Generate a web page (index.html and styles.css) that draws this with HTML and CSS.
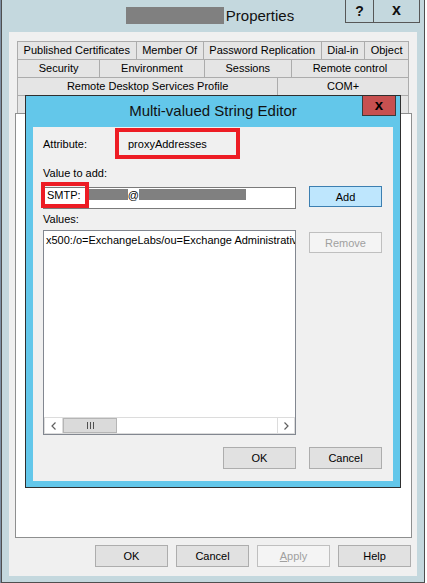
FILE: index.html
```html
<!DOCTYPE html>
<html lang="en">
  <head>
    <title>Properties</title>
    <link rel="stylesheet" href="styles.css">
  </head>
  <body>
    <div class="window">
      <div class="titlebar">
        <div class="title">
          <span class="redacted title-redacted"></span>
          <span>Properties</span>
        </div>
        <div class="caption-buttons">
          <div class="caption-btn help-btn">?</div>
          <div class="caption-btn close-btn">x</div>
        </div>
      </div>

      <div class="window-body">
        <div class="tab-strip">
          <div class="tab-row">
            <div class="tab">Published Certificates</div>
            <div class="tab">Member Of</div>
            <div class="tab">Password Replication</div>
            <div class="tab">Dial-in</div>
            <div class="tab">Object</div>
          </div>
          <div class="tab-row">
            <div class="tab">Security</div>
            <div class="tab">Environment</div>
            <div class="tab">Sessions</div>
            <div class="tab">Remote control</div>
          </div>
          <div class="tab-row">
            <div class="tab">Remote Desktop Services Profile</div>
            <div class="tab">COM+</div>
          </div>
          <!-- 대화상자에 가려진 줄 -->
          <div class="tab-row">
            <div class="tab tab-hidden"></div>
            <div class="tab tab-hidden"></div>
          </div>
        </div>

        <div class="tab-page"></div>

        <div class="button-row">
          <button class="btn">OK</button>
          <button class="btn">Cancel</button>
          <button class="btn btn-disabled"><u>A</u>pply</button>
          <button class="btn">Help</button>
        </div>
      </div>

      <!-- 떠 있는 편집 대화상자 -->
      <div class="dialog">
        <div class="dialog-titlebar">
          <div class="dialog-title">Multi-valued String Editor</div>
          <div class="dialog-close">x</div>
        </div>

        <div class="dialog-body">
          <div class="attr-row">
            <div class="attr-label">Attribute:</div>
            <div class="attr-value highlight">proxyAddresses</div>
          </div>

          <div class="field-label">Value to add:</div>
          <div class="textbox">
            <span>SMTP:</span>
            <span class="redacted redact-user"></span>
            <span>@</span>
            <span class="redacted redact-domain"></span>
            <span class="smtp-mark"></span>
          </div>
          <button class="btn btn-add">Add</button>

          <div class="field-label values-label">Values:</div>
          <div class="listbox">
            <div class="list-item">x500:/o=ExchangeLabs/ou=Exchange Administrativ</div>
            <div class="hscroll">
              <div class="sb-arrow sb-left">
                <svg width="5" height="8" viewBox="0 0 5 8"><polyline points="4.5,0.5 1,4 4.5,7.5" fill="none" stroke="#606060" stroke-width="1.2"/></svg>
              </div>
              <div class="sb-thumb">
                <svg width="7" height="7" viewBox="0 0 7 7"><path d="M0.5 0V7M3.5 0V7M6.5 0V7" stroke="#505050" stroke-width="1"/></svg>
              </div>
              <div class="sb-track"></div>
              <div class="sb-arrow sb-right">
                <svg width="5" height="8" viewBox="0 0 5 8"><polyline points="0.5,0.5 4,4 0.5,7.5" fill="none" stroke="#606060" stroke-width="1.2"/></svg>
              </div>
            </div>
          </div>
          <button class="btn btn-disabled btn-remove">Remove</button>

          <button class="btn btn-ok">OK</button>
          <button class="btn btn-cancel">Cancel</button>
        </div>
      </div>
    </div>
  </body>
</html>
```

FILE: styles.css
```css
/* 기본 */
* {
  box-sizing: border-box;
}

body {
  margin: 0;
  font-family: "Liberation Sans", Arial, sans-serif;
  font-size: 11px;
  color: #000;
  background: linear-gradient(to right, #7d8fa3 0, #7d8fa3 1px, #ffffff 1px);
}

.redacted {
  display: inline-block;
  background-color: #808080;
}

/* 바깥 창 */
.window {
  position: relative;
  width: 424px;
  height: 583px;
  margin-left: 1px;
  background-color: #c4d8de;
  border: 1px solid #4f4f4f;
  border-top: none;
  display: flex;
  flex-direction: column;
}

.titlebar {
  height: 32px;
  flex: none;
  display: grid;
  grid-template-columns: 1fr auto 1fr;
  padding: 0 4px 0 7px;
}

.title {
  grid-column: 2;
  display: flex;
  align-items: center;
  padding-right: 9px;
  padding-bottom: 1px;
  font-size: 15px;
  color: #111;
}

.title-redacted {
  width: 98px;
  height: 17px;
  margin-right: 2px;
}

.caption-buttons {
  grid-column: 3;
  justify-self: end;
  display: flex;
  align-items: flex-start;
}

.caption-btn {
  height: 23px;
  border: 1px solid #575757;
  border-top: none;
  display: flex;
  align-items: center;
  justify-content: center;
  font-weight: bold;
  color: #111;
}

.help-btn {
  width: 29px;
  font-size: 14px;
}

.close-btn {
  width: 47px;
  margin-left: -1px;
  font-size: 16px;
  padding-bottom: 3px;
}

.window-body {
  flex: 1;
  margin: 0 7px 6px;
  background-color: #f0f0f0;
  padding: 9px 5px 9px 6px;
  display: flex;
  flex-direction: column;
}

/* 탭 */
.tab-strip {
  margin: 0 3px 0 2px;
}

.tab-row {
  display: flex;
}

.tab-row + .tab-row {
  margin-top: -1px;
}

.tab {
  flex: 1 1 auto;
  height: 19px;
  border: 1px solid #acacac;
  background-color: #e5e5e5;
  text-align: center;
  line-height: 17px;
  white-space: nowrap;
}

.tab + .tab {
  margin-left: -1px;
}

.tab-hidden {
  flex-basis: 0;
}

.tab-page {
  flex: 1;
  margin-top: -1px;
  background-color: #fff;
  border: 1px solid #8e8f8f;
}

.button-row {
  display: flex;
  justify-content: flex-end;
  gap: 8px;
  margin-top: 7px;
  margin-right: 1px;
}

/* 버튼 */
.btn {
  width: 73px;
  height: 22px;
  padding: 0;
  border: 1px solid #adadad;
  background-color: #e1e1e1;
  font-family: "Liberation Sans", Arial, sans-serif;
  font-size: 11px;
  color: #000;
}

.btn-disabled {
  background-color: #f4f4f4;
  border-color: #bfbfbf;
  color: #a0a0a0;
}

/* 대화상자 */
.dialog {
  position: absolute;
  left: 23px;
  top: 95px;
  width: 376px;
  height: 393px;
  border: 1px solid #2f2f2f;
  background-color: #63c7ea;
  display: flex;
  flex-direction: column;
}

.dialog-titlebar {
  height: 31px;
  flex: none;
  display: grid;
  grid-template-columns: 1fr auto 1fr;
  padding: 0 4px;
}

.dialog-title {
  grid-column: 2;
  align-self: center;
  font-size: 15px;
  color: #111;
  padding-bottom: 2px;
}

.dialog-close {
  grid-column: 3;
  justify-self: end;
  width: 34px;
  height: 20px;
  background-color: #c75050;
  border: 1px solid #3b3b3b;
  border-top: none;
  display: flex;
  align-items: center;
  justify-content: center;
  font-weight: bold;
  font-size: 15px;
  padding-bottom: 3px;
}

.dialog-body {
  flex: 1;
  margin: 0 7px 6px;
  background-color: #f0f0f0;
  padding: 1px 11px 0 10px;
  display: grid;
  grid-template-columns: 253px 73px;
  column-gap: 13px;
  align-content: start;
  align-items: start;
}

.attr-row {
  grid-column: 1 / -1;
  display: flex;
  align-items: center;
  height: 31px;
}

.attr-label {
  width: 72px;
}

.highlight {
  border: 4px solid #ed1c24;
}

.attr-value {
  width: 125px;
  height: 31px;
  padding-left: 9px;
  display: flex;
  align-items: center;
}

.field-label {
  grid-column: 1 / -1;
  margin-top: 7px;
  line-height: 14px;
}

.values-label {
  margin-top: 3px;
}

.textbox {
  position: relative;
  margin-top: 7px;
  height: 22px;
  border: 1px solid #7a7a7a;
  background-color: #fff;
  display: flex;
  align-items: flex-start;
  padding: 1px 0 0 3px;
  line-height: 13px;
  white-space: nowrap;
}

.redact-user {
  width: 40px;
  height: 11px;
  margin-left: 7px;
}

.redact-domain {
  width: 107px;
  height: 11px;
}

.smtp-mark {
  position: absolute;
  left: -3px;
  top: -6px;
  width: 48px;
  height: 26px;
  border: 4px solid #ed1c24;
}

.btn-add {
  margin-top: 6px;
  height: 21px;
  background-color: #bee6fd;
  border-color: #3c7fb1;
}

.listbox {
  margin-top: 4px;
  height: 205px;
  border: 1px solid #828790;
  background-color: #fff;
  display: flex;
  flex-direction: column;
  overflow: hidden;
}

.list-item {
  padding: 3px 0 0 2px;
  line-height: 13px;
  white-space: nowrap;
}

.hscroll {
  margin-top: auto;
  height: 17px;
  display: flex;
  border: 1px solid #dcdcdc;
  background-color: #fff;
}

.sb-arrow {
  width: 18px;
  display: flex;
  align-items: center;
  justify-content: center;
}

.sb-left {
  border-right: 1px solid #dcdcdc;
}

.sb-right {
  width: 17px;
  border-left: 1px solid #dcdcdc;
}

.sb-thumb {
  width: 54px;
  background-color: #dadada;
  border: 1px solid #b5b5b5;
  display: flex;
  align-items: center;
  justify-content: center;
}

.sb-track {
  flex: 1;
}

.btn-remove {
  margin-top: 6px;
  height: 21px;
}

.btn-ok,
.btn-cancel {
  margin-top: 12px;
}

.btn-ok {
  justify-self: end;
}
```
